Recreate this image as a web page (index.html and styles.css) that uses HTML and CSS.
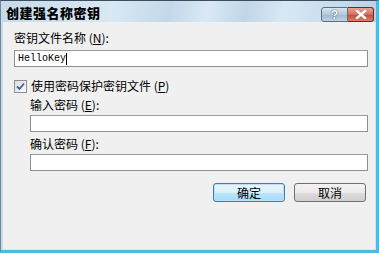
FILE: index.html
```html
<!DOCTYPE html>
<html>
<head>
<meta charset="utf-8">
<link rel="stylesheet" href="styles.css">
</head>
<body>
<div class="window">
  <div class="titlebar">
    <span class="title">创建强名称密钥</span>
    <div class="tbtns">
      <span class="tbtn help">?</span>
      <span class="tbtn close">
        <svg width="12" height="9" viewBox="0 0 12 9"><path d="M2 1 L10 8 M10 1 L2 8" stroke="#fff" stroke-width="2.4" stroke-linecap="square"/></svg>
      </span>
    </div>
  </div>
  <div class="client">
    <div class="label">密钥文件名称 (<u>N</u>):</div>
    <div class="input main"><span class="val">HelloKey</span><span class="caret"></span></div>
    <div class="check-row">
      <span class="checkbox">
        <svg width="9" height="9" viewBox="0 0 9 9"><path d="M1 4.5 L3.5 7 L8 1.5" fill="none" stroke="#3a5fa8" stroke-width="1.8"/></svg>
      </span>
      <span class="label">使用密码保护密钥文件 (<u>P</u>)</span>
    </div>
    <div class="indent">
      <div class="label">输入密码 (<u>E</u>):</div>
      <div class="input"></div>
      <div class="label">确认密码 (<u>F</u>):</div>
      <div class="input"></div>
    </div>
    <div class="buttons">
      <span class="btn default">确定</span>
      <span class="btn">取消</span>
    </div>
  </div>
</div>
</body>
</html>
```

FILE: styles.css
```css
html, body {
  margin: 0;
  padding: 0;
  width: 379px;
  height: 253px;
  overflow: hidden;
  font-family: "Noto Sans CJK SC", "Liberation Sans", sans-serif;
  font-size: 12px;
  color: #000;
}
.window {
  box-sizing: border-box;
  width: 379px;
  height: 253px;
  display: flex;
  flex-direction: column;
  background: linear-gradient(90deg, #c9dcea 0%, #d6e6f1 40%, #bfd6e7 100%);
  border-top: 1px solid #3d4f5e;
  border-left: 1px solid #6f8797;
  border-right: 3px solid #4fb9e2;
  border-bottom: 3px solid #4fb9e2;
}
.titlebar {
  height: 21px;
  display: flex;
  align-items: center;
  justify-content: space-between;
  padding-left: 5px;
  background: linear-gradient(100deg, #c5dbeb 0%, #d9e8f3 30%, #c2d8e9 45%, #dae9f4 55%, #c0d6e8 65%, #d8e8f3 75%, #b9d2e6 100%);
}
.title {
  font-weight: 900;
  font-size: 13px;
  color: #000;
  letter-spacing: 0.5px;
  line-height: 15px;
  padding-top: 1px;
}
.tbtns {
  display: flex;
  align-items: flex-start;
  align-self: flex-start;
  margin-top: 6px;
  margin-right: 2px;
}
.tbtn {
  width: 25px;
  height: 13px;
  border: 1px solid #5b6f80;
  display: flex;
  align-items: center;
  justify-content: center;
}
.help {
  border-radius: 3px 0 0 3px;
  background: linear-gradient(#d8e6f1, #b3c9dc 50%, #9db8cf 51%, #c0d4e4);
  color: #fff;
  font-family: "Liberation Sans", sans-serif;
  font-weight: bold;
  font-size: 13px;
  line-height: 13px;
  text-shadow: 0 0 1px #3c4f60, 0 0 1px #3c4f60;
}
.close {
  border-left: none;
  border-radius: 0 3px 3px 0;
  border-color: #6f2a22;
  background: linear-gradient(#e8a595, #d36f5c 50%, #c04a36 51%, #d8806c);
}
.client {
  flex: 1;
  margin: 0 0 0 2px;
  background: #f0f0f0;
  border-right: 1px solid #d7e5ee;
  border-bottom: 1px solid #d7e5ee;
  padding: 9px 8px 0 11px;
  display: flex;
  flex-direction: column;
}
.label {
  line-height: 14px;
  height: 14px;
  white-space: nowrap;
}
.label u {
  text-decoration: underline;
}
.input {
  box-sizing: border-box;
  height: 17px;
  width: 354px;
  background: #fff;
  border: 1px solid #8f8f8f;
  border-top-color: #9a9a9a;
  display: flex;
  align-items: center;
  padding-left: 3px;
}
.input.main {
  margin-top: 5px;
}
.val {
  font-family: "Liberation Mono", monospace;
  font-size: 10px;
  line-height: 12px;
}
.caret {
  width: 1px;
  height: 12px;
  background: #000;
}
.check-row {
  display: flex;
  align-items: center;
  gap: 4px;
  margin-top: 12px;
}
.checkbox {
  box-sizing: border-box;
  width: 13px;
  height: 13px;
  border: 1px solid #8e8f8f;
  background: linear-gradient(135deg, #dcdcdc, #fafafa);
  display: flex;
  align-items: center;
  justify-content: center;
}
.indent {
  padding-left: 16px;
  display: flex;
  flex-direction: column;
}
.indent .label {
  margin-top: 5px;
  margin-bottom: 3px;
}
.indent .input {
  width: 338px;
}
.buttons {
  display: flex;
  justify-content: flex-end;
  gap: 9px;
  margin-top: 12px;
  padding-right: 1px;
}
.btn {
  box-sizing: border-box;
  width: 72px;
  height: 19px;
  border: 1px solid #707070;
  border-radius: 3px;
  background: linear-gradient(#f2f2f2, #ebebeb 50%, #dddddd 51%, #cfcfcf);
  display: flex;
  align-items: center;
  justify-content: center;
  line-height: 14px;
}
.btn.default {
  border-color: #3c7fb1;
  background: linear-gradient(#eaf6fd, #d9f0fc 50%, #bee6fd 51%, #a7d9f5);
  box-shadow: inset 0 0 0 1px #b9e1f8;
}
```
